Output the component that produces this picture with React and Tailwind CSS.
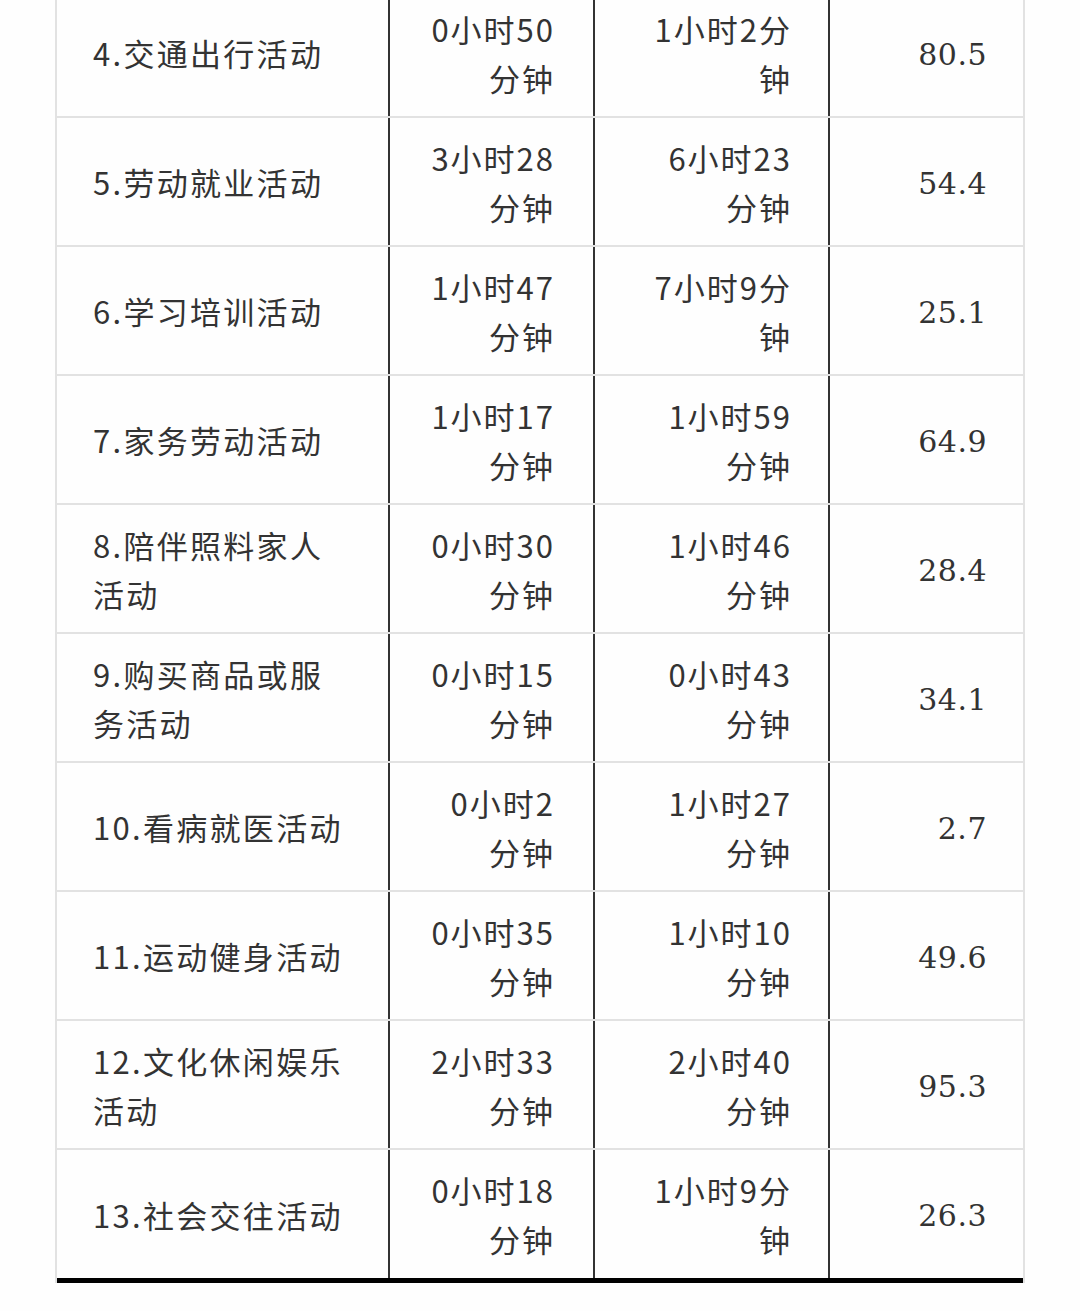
import React from 'react';

const rows = [
  { name: ['4.交通出行活动'], a: ['0小时50', '分钟'], b: ['1小时2分', '钟'], rate: '80.5' },
  { name: ['5.劳动就业活动'], a: ['3小时28', '分钟'], b: ['6小时23', '分钟'], rate: '54.4' },
  { name: ['6.学习培训活动'], a: ['1小时47', '分钟'], b: ['7小时9分', '钟'], rate: '25.1' },
  { name: ['7.家务劳动活动'], a: ['1小时17', '分钟'], b: ['1小时59', '分钟'], rate: '64.9' },
  { name: ['8.陪伴照料家人', '活动'], a: ['0小时30', '分钟'], b: ['1小时46', '分钟'], rate: '28.4' },
  { name: ['9.购买商品或服', '务活动'], a: ['0小时15', '分钟'], b: ['0小时43', '分钟'], rate: '34.1' },
  { name: ['10.看病就医活动'], a: ['0小时2', '分钟'], b: ['1小时27', '分钟'], rate: '2.7' },
  { name: ['11.运动健身活动'], a: ['0小时35', '分钟'], b: ['1小时10', '分钟'], rate: '49.6' },
  { name: ['12.文化休闲娱乐', '活动'], a: ['2小时33', '分钟'], b: ['2小时40', '分钟'], rate: '95.3' },
  { name: ['13.社会交往活动'], a: ['0小时18', '分钟'], b: ['1小时9分', '钟'], rate: '26.3' }
];

const sans = { fontFamily: '"Noto Sans CJK SC", "Noto Sans", sans-serif' };

const Lines = ({ lines }) => (
  <div>
    {lines.map((l, i) => (
      <div key={i}>{l}</div>
    ))}
  </div>
);

const App = () => {
  return (
    <div className="min-h-[1311px] bg-[#fefefe] overflow-hidden">
      <div className="ml-[55px] w-[970px] -mt-[11px] border-l-2 border-r-2 border-[#e2e2e2] text-[#333]">
        {rows.map((r, i) => {
          const last = i === rows.length - 1;
          return (
            <div
              key={i}
              className={
                'grid grid-cols-[333px_205px_235px_1fr] ' +
                (last ? 'h-[133px] border-b-[5px] border-black' : 'h-[129px] border-b-2 border-[#e2e2e2]')
              }
            >
              <div
                className="flex items-center pl-[36px] pr-2 border-r-2 border-[#333] text-[31px] leading-[49px] tracking-[2.3px]"
                style={sans}
              >
                <Lines lines={r.name} />
              </div>
              <div
                className="flex items-center justify-end text-right pr-[38px] border-r-2 border-[#333] text-[31px] leading-[49px] tracking-[2px]"
                style={sans}
              >
                <Lines lines={r.a} />
              </div>
              <div
                className="flex items-center justify-end text-right pr-[36px] border-r-2 border-[#333] text-[31px] leading-[49px] tracking-[2px]"
                style={sans}
              >
                <Lines lines={r.b} />
              </div>
              <div className="flex items-center justify-end pt-[3px] pr-[36px] text-[30px] leading-[49px] tracking-[0.5px] font-['DejaVu_Serif',serif]">
                {r.rate}
              </div>
            </div>
          );
        })}
      </div>
    </div>
  );
};

export default App;
